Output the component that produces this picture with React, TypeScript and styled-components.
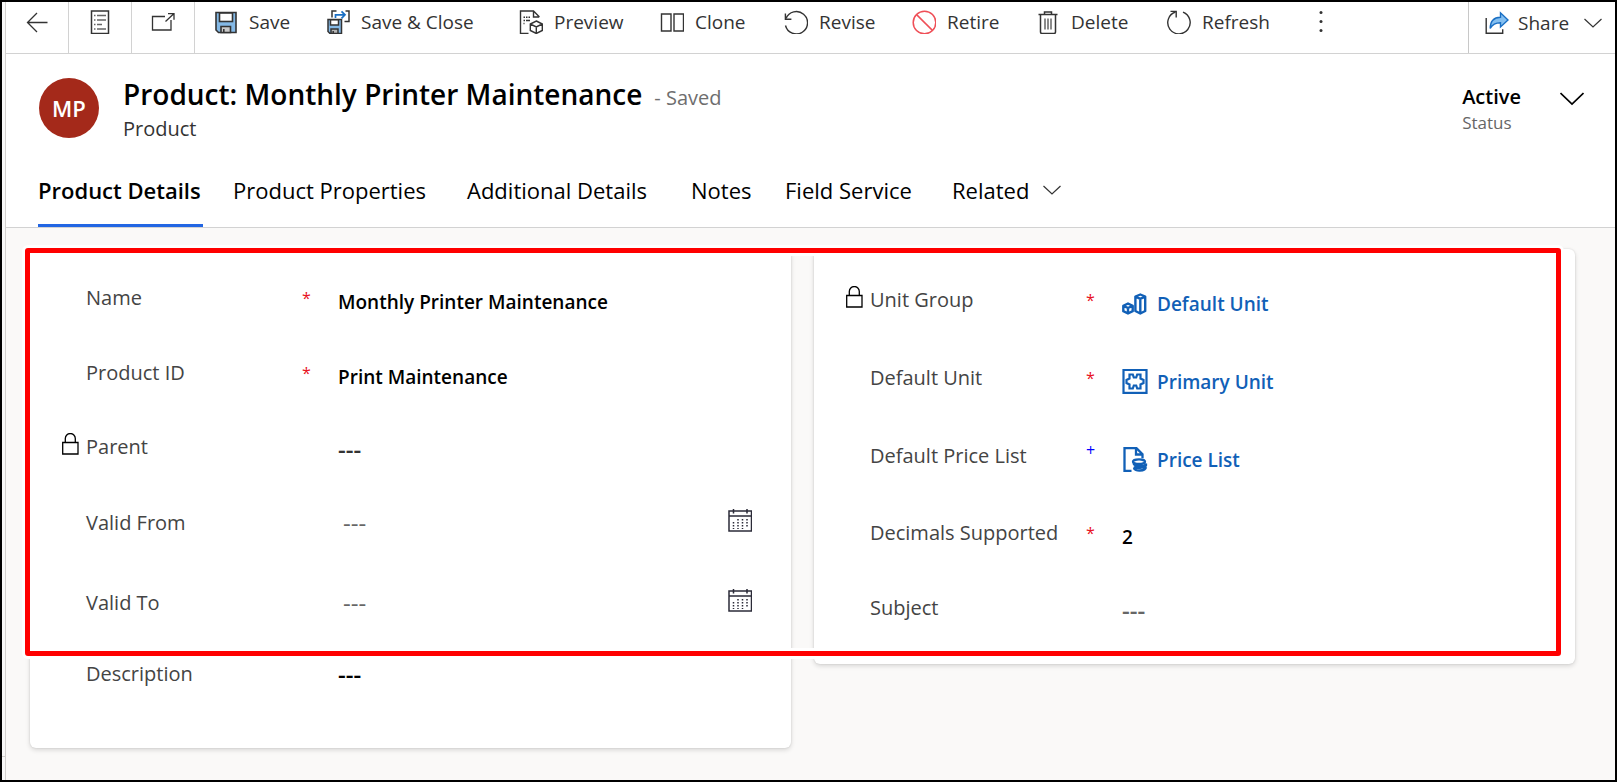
import React from "react";
import styled, { createGlobalStyle } from "styled-components";

const GlobalStyle = createGlobalStyle`
  *, *::before, *::after { box-sizing: border-box; }
  body {
    margin: 0;
    font-family: "Segoe UI", "Open Sans", "Noto Sans", sans-serif;
    color: #000;
    background: #fff;
  }
  button, input { font: inherit; color: inherit; background: none; border: 0; padding: 0; margin: 0; }
  button { cursor: pointer; }
  svg { display: block; flex: none; }
`;

/* ---------- page frame ---------- */

const Frame = styled.div`
  display: flex;
  min-height: 100vh;
  border: 2px solid #000;
`;

const Rail = styled.aside`
  flex: none;
  display: flex;
  flex-direction: column;
  width: 4px;
  border-right: 1px solid #d2d0ce;
  background: #f8f8f8;
`;

const RailBody = styled.div`
  flex: 1;
`;

const RailFooter = styled.div`
  height: 24px;
  border-top: 1px solid #d2d0ce;
`;

const Page = styled.main`
  flex: 1;
  min-width: 0;
  display: flex;
  flex-direction: column;
`;

/* ---------- command bar ---------- */

const CommandBar = styled.nav`
  display: flex;
  height: 52px;
  border-bottom: 1px solid #d2d2d2;
  font-size: 19px;
  line-height: 26px;
  color: #333;
`;

const NavButton = styled.button`
  flex: none;
  display: flex;
  justify-content: center;
  width: 63px;
  padding-top: 8px;
  border-right: 1px solid #d2d2d2;
`;

const Commands = styled.div`
  flex: 1;
  min-width: 0;
  display: flex;
  align-items: flex-start;
  padding: 7px 0 0 19px;
`;

const Command = styled.button<{ $width: number }>`
  flex: none;
  display: flex;
  align-items: center;
  gap: 11px;
  width: ${(p) => p.$width}px;
  white-space: nowrap;
  text-align: left;
`;

const ShareButton = styled.button`
  flex: none;
  display: flex;
  align-items: center;
  gap: 9px;
  width: 147px;
  padding: 0 13px 9px 16px;
  border-left: 1px solid #c8c8c8;
`;

const ShareText = styled.span`
  flex: 1;
  text-align: left;
`;

/* ---------- record header ---------- */

const Header = styled.header`
  display: flex;
  align-items: flex-start;
  height: 121px;
  padding: 22px 31px 0 33px;
`;

const Avatar = styled.div`
  flex: none;
  display: grid;
  place-items: center;
  width: 60px;
  height: 60px;
  margin: 2px 24px 0 0;
  border-radius: 50%;
  background: #a4291a;
  color: #fff;
  font-size: 22px;
  font-weight: 600;
`;

const TitleBlock = styled.div`
  flex: 1;
  min-width: 0;
`;

const TitleRow = styled.div`
  display: flex;
  align-items: baseline;
  gap: 12px;
  height: 38px;
`;

const Title = styled.h1`
  margin: 0;
  font-size: 28px;
  line-height: 36px;
  font-weight: 600;
  white-space: nowrap;
`;

const SaveState = styled.span`
  font-size: 20px;
  color: #6e6e6e;
`;

const EntityName = styled.p`
  margin: 0;
  font-size: 20px;
  line-height: 30px;
  color: #333;
`;

const StatusBlock = styled.div`
  margin: 8px 39px 0 0;
`;

const StatusValue = styled.div`
  font-size: 20px;
  line-height: 26px;
  font-weight: 600;
`;

const StatusLabel = styled.div`
  font-size: 17px;
  line-height: 26px;
  color: #666;
`;

const HeaderToggle = styled.button`
  margin-top: 16px;
`;

/* ---------- tabs ---------- */

const TabList = styled.div`
  display: flex;
  gap: 30px;
  padding-left: 32px;
  border-bottom: 1px solid #d2d2d2;
`;

const Tab = styled.button<{ $width: number; $active?: boolean }>`
  flex: none;
  display: flex;
  align-items: center;
  gap: 14px;
  width: ${(p) => p.$width}px;
  padding-bottom: 19px;
  border-bottom: 3px solid ${(p) => (p.$active ? "#2266e3" : "transparent")};
  font-size: 22px;
  line-height: 30px;
  font-weight: ${(p) => (p.$active ? 600 : 400)};
  white-space: nowrap;
`;

/* ---------- form ---------- */

const Content = styled.div`
  flex: 1;
  position: relative;
  display: grid;
  grid-template-columns: 1fr 1fr;
  align-items: start;
  gap: 23px;
  padding: 21px 40px 32px 24px;
  background: #faf9f8;
`;

const Card = styled.section<{ $top: number; $bottom: number }>`
  padding: ${(p) => p.$top}px 39px ${(p) => p.$bottom}px 32px;
  border-radius: 6px;
  background: #fff;
  box-shadow: 0 2px 5px rgba(0, 0, 0, 0.14), 0 0 2px rgba(0, 0, 0, 0.12);
`;

const FieldRow = styled.div<{ $height: number }>`
  display: grid;
  grid-template-columns: 24px 216px 36px 1fr;
  align-items: start;
  height: ${(p) => p.$height}px;
  font-size: 20px;
  line-height: 28px;
`;

const FieldLabel = styled.label`
  color: #444;
  white-space: nowrap;
`;

const Required = styled.span`
  font-size: 16px;
  color: #e8101c;
`;

const Recommended = styled.span`
  font-size: 16px;
  line-height: 16px;
  color: #0000ff;
`;

const TextValue = styled.input`
  width: 100%;
  height: 28px;
  margin-top: 4px;
  font-size: 19px;
  font-weight: 600;
  outline: none;
`;

const EmptyValue = styled.input<{ $color: string; $strong?: boolean; $drop: number }>`
  width: 100%;
  height: 28px;
  margin-top: ${(p) => p.$drop}px;
  font-size: 24px;
  font-weight: ${(p) => (p.$strong ? 600 : 400)};
  color: ${(p) => p.$color};
  outline: none;
`;

const DateBox = styled.div`
  display: flex;
  align-items: flex-start;
  height: 28px;
  padding-left: 5px;
`;

const Lookup = styled.a`
  display: flex;
  align-items: center;
  gap: 9px;
  height: 28px;
  margin-top: 4px;
  font-size: 19px;
  font-weight: 600;
  color: #1160b7;
  text-decoration: none;
`;

const Highlight = styled.div`
  position: absolute;
  top: 20px;
  left: 19px;
  right: 54px;
  height: 408px;
  border: 5px solid #ff0000;
  border-radius: 3px;
  box-shadow: 0 0 0 3px #fff, inset 0 0 0 3px #fff;
  pointer-events: none;
`;

/* ---------- icons ---------- */

interface IconProps {
  w?: number;
  h?: number;
  stroke?: string;
  sw?: number;
  children: React.ReactNode;
}

const Icon = ({ w = 24, h = 24, stroke = "#333", sw = 1.3, children }: IconProps) => (
  <svg width={w} height={h} viewBox={`0 0 ${w} ${h}`} fill="none" stroke={stroke} strokeWidth={sw} aria-hidden="true">
    {children}
  </svg>
);

const BackIcon = () => (
  <Icon><path d="M22.500 12.500H2.500M12 3L2.500 12.500L12 22" /></Icon>
);

const FormIcon = () => (
  <Icon>
    <rect x="3.500" y="1" width="17" height="22.500" strokeWidth="1.500" />
    <path d="M6 5.500h1.500M9 5.500h9M6 10h1.500M9 10h9M6 14.500h1.500M9 14.500h5M6 19h1.500M9 19h9" stroke="#666" />
  </Icon>
);

const PopOutIcon = () => (
  <Icon>
    <path d="M14 6.500H1.500v13.500h18.500v-10" />
    <path d="M14.500 11.500L22.500 4M17 3.700h6v6" />
  </Icon>
);

const SaveIcon = () => (
  <Icon sw={1.6}>
    <path d="M2 2.500h20v20H4.500L2 20z" fill="#84b9e6" />
    <rect x="5.500" y="3" width="13" height="8.500" fill="#fff" />
    <path d="M7 22.500v-6h9.500v6z" fill="#c9c9c9" />
    <path d="M9.800 19v3.500" />
  </Icon>
);

const SaveCloseIcon = () => (
  <Icon sw={1.5}>
    <path d="M2 9.500h13.500v14H4L2 21.500z" fill="#84b9e6" />
    <rect x="4.500" y="9.800" width="8" height="5.200" fill="#fff" />
    <path d="M5 23.500v-4.500h7v4.500z" fill="#b5b5b5" />
    <path d="M7.200 21v2.500" />
    <path d="M6 7.500v-6.500h4.500M19.500 1h3.500v10.500h-4.500" />
    <path d="M9.500 8v-3.200h9M15.500 1.300L19 4.800l-3.500 3.500" stroke="#1a6fc4" strokeWidth="1.700" />
  </Icon>
);

const PreviewIcon = () => (
  <Icon sw={1.4}>
    <path d="M9.500 23.500H1.500V1h13l5.500 5.500v.8M14.500 1v6H20" />
    <path d="M4.500 7.200h1.500M7 7.200h1.500M9.500 7.200h1.500M4.500 10.500h1.500M7 10.500h4M4.500 13.500h1" />
    <path d="M17.300 11l6 3v6.500l-6 3-6-3V14zM11.300 14l6 3 6-3M17.300 17v6.500" />
  </Icon>
);

const CloneIcon = () => (
  <Icon sw={1.4}>
    <path d="M1.500 4h9.500v17H1.500zM14 4h9.500v17H14z" />
  </Icon>
);

const ReviseIcon = () => (
  <Icon sw={1.4}>
    <path d="M2 8.500A11.200 11.200 0 1 1 1.500 15.500" />
    <path d="M1.400 3.500v5.700h6" />
  </Icon>
);

const RetireIcon = () => (
  <Icon stroke="#ef4f57" sw={1.5}>
    <circle cx="12.500" cy="12.500" r="11.300" />
    <path d="M4.600 4.600l15.800 15.800" />
  </Icon>
);

const DeleteIcon = () => (
  <Icon sw={1.5}>
    <path d="M2.500 4.500h19M8.500 4.500V2h7v2.500M4.500 4.500v17.500q0 1.500 1.500 1.500h12q1.500 0 1.500-1.500V4.500" />
    <path d="M9 8.500v11M12 8.500v11M15 8.500v11" stroke="#666" />
  </Icon>
);

const RefreshIcon = () => (
  <Icon sw={1.4}>
    <path d="M16 2.200A11.200 11.200 0 1 1 8.500 2" />
    <path d="M3.500 1.400h5.700v6" />
  </Icon>
);

const MoreIcon = () => (
  <Icon stroke="none">
    <g fill="#333"><circle cx="12" cy="3.500" r="1.500" /><circle cx="12" cy="12.500" r="1.500" /><circle cx="12" cy="21.500" r="1.500" /></g>
  </Icon>
);

const ShareIcon = () => (
  <Icon sw={1.4}>
    <path d="M1.200 7v15.300h16.500v-4" />
    <path d="M5.200 17.500C5.200 10.500 9 6.500 15.500 6.300V1.800L23 9l-7.500 7v-4.200c-5 0-8 1.400-10.300 5.700z" fill="#84bff0" stroke="#1a6fc4" />
  </Icon>
);

const Chevron = ({ w, sw = 1.2, stroke = "#333" }: { w: number; sw?: number; stroke?: string }) => (
  <Icon w={w} h={w / 2 + 2} sw={sw} stroke={stroke}>
    <path d={`M.5 1L${w / 2} ${w / 2}L${w - 0.5} 1`} />
  </Icon>
);

const LockIcon = () => (
  <Icon w={17} h={24} stroke="#000">
    <path d="M.7 9.500h15.300v11.500H.7zM3.300 9.500V5.500a5 5 0 0 1 10 0v4" />
  </Icon>
);

const CalendarIcon = () => (
  <Icon stroke="#2b2b38" sw={1.5}>
    <rect x="1" y="2" width="22.500" height="20" />
    <path d="M1 7h22.500M5.500 0v4.500M19 0v4.500" />
    <path d="M10 10v10M14.500 10v10M19 10v7.500M5.500 13v7" strokeDasharray="1.500 1.500" />
  </Icon>
);

const UnitGroupIcon = () => (
  <Icon w={26} h={26} stroke="#1160b7" sw={2.4}>
    <path d="M6 12.500l4.700 2.300v5.400L6 22.500l-4.700-2.300v-5.400zM1.300 14.800L6 17l4.700-2.200M6 17v5.500" strokeLinejoin="round" />
    <path d="M18.300 3.500l4.900 2v14.500l-4.900 2.500-4.900-2.500V5.500zM13.400 5.500l4.900 2.300 4.900-2.300M18.300 8v14" strokeLinejoin="round" />
  </Icon>
);

const UnitIcon = () => (
  <Icon w={26} h={26} stroke="#1160b7" sw={2.2}>
    <rect x="1.500" y="0.900" width="23" height="23" />
    <path d="M7.500 5.500h3.300l1 3h2.400l1-3h3.300v4l3 1.500v3l-3 1.500v4h-3.300l-1-3h-2.400l-1 3H7.500v-4l-3-1.500v-3l3-1.500z" />
  </Icon>
);

const PriceListIcon = () => (
  <Icon w={26} h={26} stroke="#1160b7" sw={2.3}>
    <path d="M9.500 23.800H2.500V1.200h12l6 6v4M14 1.200v6.300h6.500" />
    <ellipse cx="17" cy="14.700" rx="6" ry="2.300" />
    <path d="M11.500 16.500c1 3.300 12 3.300 12.500 0v2c-1 3-10.500 3-12 1M12 21c0 3.500 11.500 3.500 12-1" />
  </Icon>
);

/* ---------- data ---------- */

const commands = [
  { text: "Save", width: 112, icon: <SaveIcon /> },
  { text: "Save & Close", width: 193, icon: <SaveCloseIcon /> },
  { text: "Preview", width: 141, icon: <PreviewIcon /> },
  { text: "Clone", width: 124, icon: <CloneIcon /> },
  { text: "Revise", width: 128, icon: <ReviseIcon /> },
  { text: "Retire", width: 124, icon: <RetireIcon /> },
  { text: "Delete", width: 131, icon: <DeleteIcon /> },
  { text: "Refresh", width: 142, icon: <RefreshIcon /> },
];

const tabs = [
  { text: "Product Details", width: 165 },
  { text: "Product Properties", width: 204 },
  { text: "Additional Details", width: 194 },
  { text: "Notes", width: 64 },
  { text: "Field Service", width: 137 },
];

type FieldKind = "text" | "empty" | "date" | "lookup";

interface FieldSpec {
  label: string;
  height: number;
  kind: FieldKind;
  value?: string;
  color?: string;
  drop?: number;
  locked?: boolean;
  mark?: "required" | "recommended";
  icon?: React.ReactNode;
}

const productFields: FieldSpec[] = [
  { label: "Name", height: 75, kind: "text", value: "Monthly Printer Maintenance", mark: "required" },
  { label: "Product ID", height: 74, kind: "text", value: "Print Maintenance", mark: "required" },
  { label: "Parent", height: 76, kind: "empty", color: "#333", drop: 2, locked: true },
  { label: "Valid From", height: 80, kind: "date" },
  { label: "Valid To", height: 71, kind: "date" },
  { label: "Description", height: 28, kind: "empty", color: "#000" },
];

const unitFields: FieldSpec[] = [
  { label: "Unit Group", height: 78, kind: "lookup", value: "Default Unit", locked: true, mark: "required", icon: <UnitGroupIcon /> },
  { label: "Default Unit", height: 78, kind: "lookup", value: "Primary Unit", mark: "required", icon: <UnitIcon /> },
  { label: "Default Price List", height: 77, kind: "lookup", value: "Price List", mark: "recommended", icon: <PriceListIcon /> },
  { label: "Decimals Supported", height: 75, kind: "text", value: "2", mark: "required" },
  { label: "Subject", height: 28, kind: "empty", color: "#666", drop: 2 },
];

function Field({ spec }: { spec: FieldSpec }) {
  const id = "field-" + spec.label.toLowerCase().replace(/ /g, "-");
  return (
    <FieldRow $height={spec.height}>
      <span>{spec.locked && <LockIcon />}</span>
      <FieldLabel htmlFor={id}>{spec.label}</FieldLabel>
      {spec.mark === "recommended" ? <Recommended>+</Recommended> : <Required>{spec.mark && "*"}</Required>}
      {spec.kind === "text" && <TextValue id={id} defaultValue={spec.value} />}
      {spec.kind === "empty" && (
        <EmptyValue id={id} defaultValue="---" $color={spec.color ?? "#000"} $strong $drop={spec.drop ?? 0} readOnly={spec.locked} />
      )}
      {spec.kind === "date" && (
        <DateBox>
          <EmptyValue id={id} defaultValue="---" $color="#666" $drop={0} />
          <button type="button" aria-label={`Choose ${spec.label}`}><CalendarIcon /></button>
        </DateBox>
      )}
      {spec.kind === "lookup" && (
        <Lookup id={id} href="#">{spec.icon}{spec.value}</Lookup>
      )}
    </FieldRow>
  );
}

export default function App() {
  return (
    <>
      <GlobalStyle />
      <Frame>
        <Rail><RailBody /><RailFooter /></Rail>
        <Page>
          <CommandBar>
            <NavButton type="button" aria-label="Back"><BackIcon /></NavButton>
            <NavButton type="button" aria-label="Form"><FormIcon /></NavButton>
            <NavButton type="button" aria-label="Open in new window"><PopOutIcon /></NavButton>
            <Commands>
              {commands.map((c) => (
                <Command key={c.text} type="button" $width={c.width}>{c.icon}{c.text}</Command>
              ))}
              <Command type="button" $width={24} aria-label="More commands"><MoreIcon /></Command>
            </Commands>
            <ShareButton type="button">
              <ShareIcon />
              <ShareText>Share</ShareText>
              <Chevron w={18} />
            </ShareButton>
          </CommandBar>

          <Header>
            <Avatar>MP</Avatar>
            <TitleBlock>
              <TitleRow>
                <Title>Product: Monthly Printer Maintenance</Title>
                <SaveState>- Saved</SaveState>
              </TitleRow>
              <EntityName>Product</EntityName>
            </TitleBlock>
            <StatusBlock>
              <StatusValue>Active</StatusValue>
              <StatusLabel>Status</StatusLabel>
            </StatusBlock>
            <HeaderToggle type="button" aria-label="Show header fields"><Chevron w={24} sw={1.7} stroke="#000" /></HeaderToggle>
          </Header>

          <TabList role="tablist">
            {tabs.map((t, i) => (
              <Tab key={t.text} type="button" role="tab" aria-selected={i === 0} $width={t.width} $active={i === 0}>{t.text}</Tab>
            ))}
            <Tab type="button" role="tab" aria-selected={false} $width={110}>Related<Chevron w={18} /></Tab>
          </TabList>

          <Content>
            <Card $top={35} $bottom={60}>
              {productFields.map((f) => <Field key={f.label} spec={f} />)}
            </Card>
            <Card $top={37} $bottom={42}>
              {unitFields.map((f) => <Field key={f.label} spec={f} />)}
            </Card>
            <Highlight />
          </Content>
        </Page>
      </Frame>
    </>
  );
}
